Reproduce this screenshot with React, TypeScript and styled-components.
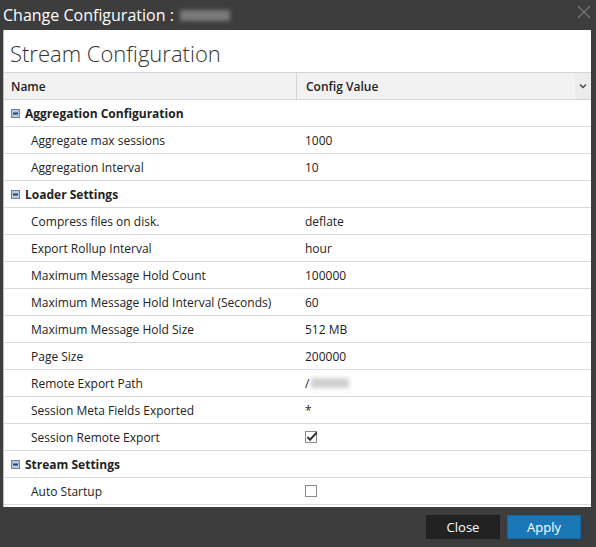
import styled, { createGlobalStyle } from "styled-components";

type Row = { name: string; value?: string; check?: boolean; blur?: boolean };
type Group = { title: string; rows: Row[] };

const groups: Group[] = [
  {
    title: "Aggregation Configuration",
    rows: [
      { name: "Aggregate max sessions", value: "1000" },
      { name: "Aggregation Interval", value: "10" },
    ],
  },
  {
    title: "Loader Settings",
    rows: [
      { name: "Compress files on disk.", value: "deflate" },
      { name: "Export Rollup Interval", value: "hour" },
      { name: "Maximum Message Hold Count", value: "100000" },
      { name: "Maximum Message Hold Interval (Seconds)", value: "60" },
      { name: "Maximum Message Hold Size", value: "512 MB" },
      { name: "Page Size", value: "200000" },
      { name: "Remote Export Path", value: "/", blur: true },
      { name: "Session Meta Fields Exported", value: "*" },
      { name: "Session Remote Export", check: true },
    ],
  },
  {
    title: "Stream Settings",
    rows: [{ name: "Auto Startup", check: false }],
  },
];

const Global = createGlobalStyle`
  html, body { margin: 0; padding: 0; background: #3d3d3d; }
  body { font-family: "Open Sans", "Noto Sans", sans-serif; }
`;

const Dialog = styled.div`
  width: 596px;
  height: 547px;
  background: #3d3d3d;
  display: flex;
  flex-direction: column;
  box-sizing: border-box;
`;

const TitleBar = styled.div`
  height: 30px;
  display: flex;
  align-items: center;
  padding: 0 4px 0 3px;
  color: #ffffff;
  font-size: 16px;
  gap: 6px;
`;

const Blur = styled.span<{ w: number; dark?: boolean }>`
  display: inline-block;
  width: ${(p) => p.w}px;
  height: ${(p) => (p.dark ? 10 : 11)}px;
  background: ${(p) => (p.dark ? "#cfcfcf" : "#7a7a7a")};
  filter: blur(2px);
`;

const CloseX = styled.button`
  margin-left: auto;
  background: none;
  border: none;
  padding: 0;
  width: 16px;
  height: 16px;
  margin-top: -4px;
  cursor: pointer;
`;

const Panel = styled.div`
  margin: 0 5px 0 3px;
  height: 477px;
  background: #ffffff;
  border-left: 1px solid #bdbdbd;
  display: flex;
  flex-direction: column;
  overflow: hidden;
`;

const Heading = styled.div`
  height: 42px;
  display: flex;
  align-items: center;
  padding-left: 6px;
  padding-top: 3px;
  font-size: 22px;
  font-weight: 300;
  color: #333;
  box-sizing: border-box;
`;

const HeaderRow = styled.div`
  display: grid;
  grid-template-columns: 292px 1fr 16px;
  height: 28px;
  background: #f2f2f2;
  border-top: 1px solid #d4d4d4;
  border-bottom: 1px solid #d4d4d4;
  box-sizing: border-box;
  font-size: 12px;
  font-weight: 600;
  color: #222;
`;

const HeadCell = styled.div<{ divider?: boolean }>`
  display: flex;
  align-items: center;
  padding-left: ${(p) => (p.divider ? 9 : 7)}px;
  border-left: ${(p) => (p.divider ? "1px solid #d4d4d4" : "none")};
`;

const SortCell = styled.div`
  display: flex;
  align-items: center;
  justify-content: center;
  background: #ececec;
`;

const BodyRow = styled.div`
  display: grid;
  grid-template-columns: 292px 1fr;
  height: 27px;
  border-bottom: 1px solid #d9d9d9;
  box-sizing: border-box;
  font-size: 12px;
  color: #222;
  align-items: center;
`;

const GroupRow = styled.div`
  display: flex;
  align-items: center;
  gap: 5px;
  height: 27px;
  border-bottom: 1px solid #d9d9d9;
  box-sizing: border-box;
  padding-left: 7px;
  font-size: 12px;
  font-weight: 700;
  color: #222;
`;

const NameCell = styled.div`
  padding-left: 27px;
  white-space: nowrap;
`;

const ValueCell = styled.div`
  padding-left: 9px;
  display: flex;
  align-items: center;
  gap: 2px;
`;

const Footer = styled.div`
  flex: 1;
  display: flex;
  justify-content: flex-end;
  align-items: center;
  gap: 7px;
  padding-right: 15px;
`;

const Button = styled.button<{ primary?: boolean }>`
  width: 74px;
  height: 24px;
  border: 1px solid ${(p) => (p.primary ? "#1565a0" : "#1f1f1f")};
  background: ${(p) => (p.primary ? "#1a78b8" : "#222222")};
  color: #ffffff;
  font-family: "Open Sans", sans-serif;
  font-size: 13px;
  padding: 0;
  cursor: pointer;
`;

function Minus() {
  return (
    <svg width="9" height="9" viewBox="0 0 9 9">
      <rect x="0.5" y="0.5" width="8" height="8" fill="#b4c8de" stroke="#6a81a0" />
      <rect x="2" y="3.5" width="5" height="2" fill="#2c4466" />
    </svg>
  );
}

function CheckBox({ checked }: { checked: boolean }) {
  return (
    <svg width="13" height="13" viewBox="0 0 13 13">
      <rect x="0.5" y="0.5" width="11" height="11" fill="#fff" stroke="#8a8a8a" />
      {checked && (
        <path d="M2.5 6 L5 8.8 L11.8 1.5" fill="none" stroke="#333" strokeWidth="2" />
      )}
    </svg>
  );
}

export default function App() {
  return (
    <Dialog>
      <Global />
      <TitleBar>
        Change Configuration :
        <Blur w={50} />
        <CloseX aria-label="close">
          <svg width="14" height="14" viewBox="0 0 14 14">
            <path d="M1 1 L13 13 M13 1 L1 13" stroke="#6e6e6e" strokeWidth="1.6" />
          </svg>
        </CloseX>
      </TitleBar>
      <Panel>
        <Heading>Stream Configuration</Heading>
        <HeaderRow>
          <HeadCell>Name</HeadCell>
          <HeadCell divider>Config Value</HeadCell>
          <SortCell>
            <svg width="8" height="6" viewBox="0 0 8 6">
              <path d="M1 1.5 L4 4.5 L7 1.5" fill="none" stroke="#444" strokeWidth="1.4" />
            </svg>
          </SortCell>
        </HeaderRow>
        {groups.map((g) => (
          <div key={g.title}>
            <GroupRow>
              <Minus />
              {g.title}
            </GroupRow>
            {g.rows.map((r) => (
              <BodyRow key={r.name}>
                <NameCell>{r.name}</NameCell>
                <ValueCell>
                  {r.check !== undefined ? <CheckBox checked={r.check} /> : r.value}
                  {r.blur && <Blur w={38} dark />}
                </ValueCell>
              </BodyRow>
            ))}
          </div>
        ))}
      </Panel>
      <Footer>
        <Button>Close</Button>
        <Button primary>Apply</Button>
      </Footer>
    </Dialog>
  );
}
